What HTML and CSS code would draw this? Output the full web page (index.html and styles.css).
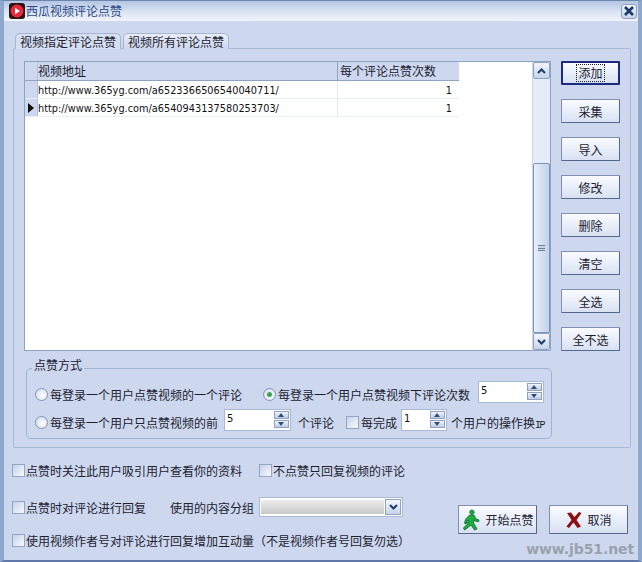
FILE: index.html
```html
<!DOCTYPE html>
<html lang="zh">
<head>
<meta charset="utf-8">
<title>西瓜视频评论点赞</title>
<link rel="stylesheet" href="styles.css">
</head>
<body>
<div class="window">
  <div class="titlebar">
    <svg class="app-icon" width="16" height="16" viewBox="0 0 16 16"><rect x="0" y="0" width="16" height="16" rx="3" fill="#2a1414"/><circle cx="8" cy="8" r="6.5" fill="#e8283c"/><path d="M6 4.8 L11 8 L6 11.2 Z" fill="#fff"/></svg>
    <span class="title">西瓜视频评论点赞</span>
    <span class="close"><svg width="12" height="12" viewBox="0 0 12 12"><path d="M2 2 L10 10 M10 2 L2 10" stroke="#1c3a66" stroke-width="2.6"/></svg></span>
  </div>
  <div class="client">
    <div class="tabs">
      <div class="tab active">视频指定评论点赞</div>
      <div class="tab">视频所有评论点赞</div>
    </div>
    <div class="panel">
      <div class="top">
        <div class="grid">
          <div class="table">
            <div class="row head">
              <div class="ind"></div><div class="c1">视频地址</div><div class="c2">每个评论点赞次数</div>
            </div>
            <div class="row">
              <div class="ind"></div><div class="c1 url">http://www.365yg.com/a6523366506540040711/</div><div class="c2 num">1</div>
            </div>
            <div class="row">
              <div class="ind"><span class="arrow"></span></div><div class="c1 url">http://www.365yg.com/a6540943137580253703/</div><div class="c2 num">1</div>
            </div>
          </div>
          <div class="scroll">
            <div class="sbtn"><svg width="9" height="6" viewBox="0 0 9 6"><path d="M1 5 L4.5 1.5 L8 5" fill="none" stroke="#1c3a66" stroke-width="2"/></svg></div>
            <div class="strack"></div>
            <div class="thumb"><span class="grip"></span></div>
            <div class="sbtn"><svg width="9" height="6" viewBox="0 0 9 6"><path d="M1 1 L4.5 4.5 L8 1" fill="none" stroke="#1c3a66" stroke-width="2"/></svg></div>
          </div>
        </div>
        <div class="side">
          <button class="btn default"><span class="focus">添加</span></button>
          <button class="btn">采集</button>
          <button class="btn">导入</button>
          <button class="btn">修改</button>
          <button class="btn">删除</button>
          <button class="btn">清空</button>
          <button class="btn">全选</button>
          <button class="btn">全不选</button>
        </div>
      </div>
      <fieldset class="group">
        <legend>点赞方式</legend>
        <div class="grow g1">
          <span class="radio"></span><span class="lbl w1">每登录一个用户点赞视频的一个评论</span>
          <span class="radio on"></span><span class="lbl w2">每登录一个用户点赞视频下评论次数</span>
          <span class="spin s1"><span class="val">5</span><span class="updown"><i class="up"></i><i class="down"></i></span></span>
        </div>
        <div class="grow g2">
          <span class="radio"></span><span class="lbl w3">每登录一个用户只点赞视频的前</span>
          <span class="spin s2"><span class="val">5</span><span class="updown"><i class="up"></i><i class="down"></i></span></span>
          <span class="lbl w4">个评论</span>
          <span class="check"></span><span class="lbl w5">每完成</span>
          <span class="spin s3"><span class="val">1</span><span class="updown"><i class="up"></i><i class="down"></i></span></span>
          <span class="lbl w6">个用户的操作换<span class="ip">IP</span></span>
        </div>
      </fieldset>
    </div>
    <div class="bottom">
      <div class="opt o1"><span class="check"></span><span class="lbl b1">点赞时关注此用户吸引用户查看你的资料</span><span class="check"></span><span class="lbl">不点赞只回复视频的评论</span></div>
      <div class="opt o2">
        <span class="check"></span><span class="lbl b2">点赞时对评论进行回复</span><span class="lbl b3">使用的内容分组</span>
        <span class="combo"><span class="cfill"></span><span class="cbtn"><svg width="9" height="6" viewBox="0 0 9 6"><path d="M1 1 L4.5 4.5 L8 1" fill="none" stroke="#1c3a66" stroke-width="2"/></svg></span></span>
      </div>
      <div class="opt o3"><span class="check"></span><span class="lbl">使用视频作者号对评论进行回复增加互动量（不是视频作者号回复勿选）</span></div>
      <div class="actions">
        <button class="btn big"><svg width="20" height="22" viewBox="0 0 20 22"><path d="M11 1 a2.2 2.2 0 1 1 -.1 0 Z M8.5 6 L13 6 L15 10 L18 11 L17.5 12.8 L13.8 12 L13 10.5 L12.5 14 L16 20 L13.5 21 L10 16 L7.5 18 L3.5 21 L2.5 19 L6 15.5 L7.5 11 L6 12 L5 15 L3.5 14.3 L4.5 10.5 Z" fill="#1fae3c" stroke="#063" stroke-width=".8"/></svg><span>开始点赞</span></button>
        <button class="btn big"><svg width="18" height="18" viewBox="0 0 18 18"><path d="M2 2 L6 1.5 L9.5 6 L14 1 L16.5 2 L11.5 9 L16 15.5 L12.5 17 L8.5 11.5 L4 17 L1.5 15.5 L6.5 9 Z" fill="#8e0f12"/></svg><span>取消</span></button>
      </div>
    </div>
    <div class="watermark">www.jb51.net</div>
  </div>
</div>
</body>
</html>
```
FILE: styles.css
```css
* { box-sizing: border-box; }
html, body { margin: 0; padding: 0; }
body {
  width: 642px; height: 562px; overflow: hidden;
  font: 12px "Noto Sans CJK SC", "Liberation Sans", sans-serif;
  color: #1c2230;
}
.window {
  position: relative;
  width: 642px; height: 562px;
  background: #cdd8ee;
  border: 1px solid #6d86ad;
  border-left-width: 4px;
  border-right-width: 4px;
  border-bottom-width: 2px;
  border-left-color: #8ea7cc;
  border-right-color: #8ea7cc;
  border-bottom-color: #5f7aa8;
  display: flex;
  flex-direction: column;
}
.titlebar {
  height: 20px;
  flex: none;
  display: flex;
  align-items: center;
  padding-left: 5px;
  background: linear-gradient(to bottom, #b4c5e2 0%, #dbe4f3 55%, #f2f5fb 100%);
}
.app-icon { flex: none; }
.title { margin-left: 1px; color: #2a4a85; font-size: 12px; line-height: 20px; }
.close {
  margin-left: auto; margin-right: 1px;
  width: 16px; height: 15px;
  display: flex; align-items: center; justify-content: center;
  border: 1px solid #8c9fbe; border-radius: 3px;
  background: linear-gradient(#f2f5fb, #c6d3e9);
}
.client { position: relative; flex: 1; padding: 12px 7px 0 9px; display: flex; flex-direction: column; }
.tabs { display: flex; height: 15px; padding-left: 2px; gap: 2px; flex: none; position: relative; z-index: 1; }
.tab {
  width: 106px; height: 16px;
  border: 1px solid #a6b6d3; border-bottom: 0;
  border-radius: 5px 5px 0 0;
  background: linear-gradient(#e8edf7, #cdd8ee);
  text-align: center; line-height: 15px;
  font-size: 12px;
}
.tab.active { background: #d5dff1; }
.panel {
  width: 618px; height: 400px;
  border: 1px solid #a9b8d4;
  border-radius: 2px;
  padding: 12px 0 0 10px;
  background: #cdd8ee;
  flex: none;
}
.top { display: flex; height: 290px; }
.grid {
  width: 527px; height: 290px;
  background: #fff;
  border: 1px solid #8ea2c4;
  display: flex;
  flex: none;
  position: relative;
}
.table { width: 507px; flex: none; }
.row { display: flex; height: 18px; border-bottom: 1px solid #e9edf4; width: 434px; }
.row.head { height: 19px; background: #cdd8ee; border-bottom: 1px solid #8ea2c4; }
.ind { width: 13px; flex: none; background: #cdd8ee; border-right: 1px solid #b3c1da; display: flex; align-items: center; justify-content: center; }
.arrow { width: 0; height: 0; border-left: 6px solid #111; border-top: 5px solid transparent; border-bottom: 5px solid transparent; }
.c1 { width: 300px; flex: none; line-height: 18px; border-right: 1px solid #e4e8f0; }
.head .c1 { border-right: 1px solid #8ea2c4; }
.c2 { flex: 1; padding-left: 2px; line-height: 18px; }
.url { font: 9.75px/19px "DejaVu Sans", sans-serif; color: #111; }
.num { text-align: right; padding-right: 7px; font: 9.75px/19px "DejaVu Sans", sans-serif; color: #111; }
.scroll {
  width: 18px; flex: none; display: flex; flex-direction: column; margin-left: auto;
  background: #e5ebf7; border-left: 1px solid #cdd6e8;
}
.sbtn {
  width: 17px; height: 17px; flex: none;
  display: flex; align-items: center; justify-content: center;
  border: 1px solid #8ea2c4; border-radius: 2px;
  background: linear-gradient(#f3f6fc, #c7d4ea);
}
.strack { height: 84px; flex: none; }
.thumb {
  flex: 1;
  border: 1px solid #7f93b8; border-radius: 2px 2px 0 0;
  background: linear-gradient(to right, #e9eef8, #c4d1e8);
  display: flex; align-items: center; justify-content: center;
}
.grip { width: 7px; height: 6px; border-top: 1px solid #6f7f9c; border-bottom: 1px solid #6f7f9c; background: linear-gradient(#c8d4e9 0 2px, #6f7f9c 2px 3px, #c8d4e9 3px); }
.side { display: flex; flex-direction: column; gap: 14px; margin-left: 10px; }
.btn {
  width: 59px; height: 24px; flex: none;
  padding: 0; margin: 0;
  font: 12px "Noto Sans CJK SC", sans-serif; color: #1c2230;
  border: 1px solid #7f90b2;
  border-bottom-color: #56688e; border-right-color: #56688e;
  border-radius: 1px;
  background: linear-gradient(#f9fbff, #d8e1f2);
  display: flex; align-items: center; justify-content: center;
}
.btn.default { border: 2px solid #1c2a80; }
.focus { outline: 1px dotted #222; line-height: 14px; padding: 1px; }
.group {
  position: relative;
  width: 526px; height: 77px; margin: 11px 0 0 2px; padding: 0 0 0 8px;
  border: 1px solid #a2b2d0; border-radius: 5px;
  min-width: 0;
}
.group legend { padding: 0 2px; margin-left: -3px; line-height: 12px; position: relative; top: -3px; }
.grow { display: flex; align-items: center; height: 24px; }
.g1 { margin-top: 8px; }
.g2 { margin-top: 4px; }
.radio {
  width: 13px; height: 13px; border-radius: 50%; flex: none;
  border: 1px solid #8295b5;
  background: radial-gradient(circle at 60% 60%, #fff, #cbd6ea);
  margin-right: 2px; position: relative;
}
.radio.on::after {
  content: ""; position: absolute; left: 3px; top: 3px; width: 5px; height: 5px; border-radius: 50%; background: #3aa655;
}
.lbl { white-space: nowrap; }
.w1 { width: 213px; }
.w2 { width: 200px; }
.w3 { width: 174px; }
.w4 { margin-left: 7px; width: 48px; }
.w5 { width: 40px; margin-left: 1px; }
.w6 { margin-left: 4px; }
.ip { font: 10px "Liberation Mono", monospace; letter-spacing: -1.5px; }
.spin {
  height: 22px; border: 1px solid #a9b8d4; background: #fff;
  display: flex; align-items: center; flex: none; margin-bottom: 5px;
  font: 10px "DejaVu Sans", sans-serif; color: #111;
}
.s1 { width: 66px; }
.s2 { width: 67px; }
.s3 { width: 46px; }
.val { padding-left: 2px; margin-bottom: 2px; }
.updown { margin-left: auto; margin-right: 1px; width: 15px; height: 17px; display: flex; flex-direction: column; gap: 1px; }
.updown i { flex: 1; display: block; position: relative; border: 1px solid #8ea2c4; background: linear-gradient(#f0f4fb, #bccbe4); }
.up::after { content: ""; position: absolute; left: 3px; top: 1px; border: 3.5px solid transparent; border-top: 0; border-bottom: 4px solid #334c74; }
.down::after { content: ""; position: absolute; left: 3px; top: 1px; border: 3.5px solid transparent; border-bottom: 0; border-top: 4px solid #334c74; }
.check {
  width: 13px; height: 13px; flex: none;
  border: 1px solid #93a5c4;
  background: linear-gradient(135deg, #c5d2e8, #f8faff);
  margin-right: 1px;
}
.bottom { position: relative; flex: 1; }
.opt { position: absolute; left: -1px; display: flex; align-items: center; height: 18px; white-space: nowrap; }
.o1 { top: 13px; }
.o2 { top: 50px; }
.o3 { top: 83px; }
.b1 { width: 233px; }
.b2 { width: 144px; }
.b3 { width: 89px; }
.combo { width: 144px; height: 20px; border: 1px solid #a9b8d4; background: #fff; padding: 1px; display: flex; gap: 1px; }
.cfill { flex: 1; background: linear-gradient(#ececec, #c9c9c9); margin: 1px 0; }
.cbtn { width: 16px; flex: none; display: flex; align-items: center; justify-content: center; border: 1px solid #8ea2c4; background: linear-gradient(#f3f6fc, #c7d4ea); }
.actions { position: absolute; left: 445px; top: 57px; display: flex; gap: 12px; }
.big { width: 79px; height: 29px; gap: 4px; }
.watermark {
  position: absolute; right: 4px; bottom: 3px;
  font: 700 14px "DejaVu Sans", sans-serif; color: #9aa2ae; letter-spacing: -.1px;
}
```
